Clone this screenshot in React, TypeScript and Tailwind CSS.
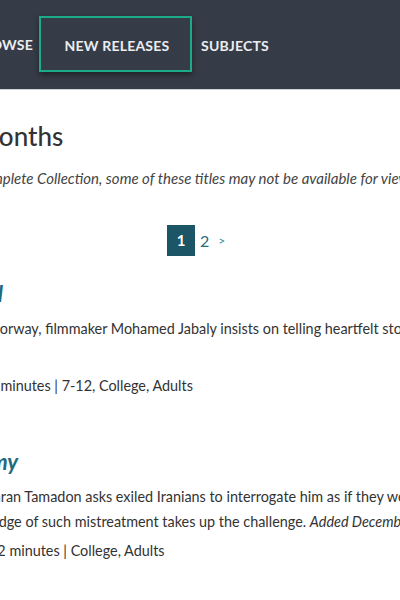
const lato = { fontFamily: "Lato, 'Noto Sans', sans-serif" };

function NavBar() {
  return (
    <header className="h-[90px] border-b border-[#cfd2d6] bg-[#363c47]">
      <nav className="flex h-full items-center text-[14px] font-bold tracking-[0.2px] text-[#ecedef]">
        <span className="-ml-[47px] w-[80px] shrink-0 whitespace-nowrap text-right">BROWSE</span>
        <span className="ml-[6px] mt-[-1px] flex h-[56px] w-[153px] shrink-0 items-center justify-center whitespace-nowrap border-2 border-[#1bab8b] pl-[3px] pt-[2px] shadow-[0_3px_6px_rgba(0,0,0,0.45)]">
          NEW RELEASES
        </span>
        <span className="ml-[9px] whitespace-nowrap pt-[1px]">SUBJECTS</span>
      </nav>
    </header>
  );
}

function Pagination() {
  return (
    <div className="ml-[167px] mt-[36px] flex items-center">
      <span className="flex h-[31px] w-[28px] items-center justify-center bg-[#1b5566] text-[15px] font-bold text-white">
        1
      </span>
      <span className="ml-[5px] text-[16px] text-[#2b6a7b]">2</span>
      <span className="ml-[9px] text-[12px] text-[#3a8a99]">&gt;</span>
    </div>
  );
}

type Release = {
  title: string;
  titleOffset: string;
  lines: { text: React.ReactNode; offset: string }[];
  meta: string;
  metaOffset: string;
  metaGap: string;
};

function ReleaseItem({ item, first }: { item: Release; first?: boolean }) {
  return (
    <article className={first ? "mt-[24px]" : "mt-[50px]"}>
      <h2
        className={`whitespace-nowrap text-[22px] font-bold italic leading-[28px] text-[#1e6a7e] ${item.titleOffset}`}
      >
        {item.title}
      </h2>
      <div className="mt-[8px] text-[14.4px] leading-[25px] text-[#333]">
        {item.lines.map((line, i) => (
          <p key={i} className={`h-[25px] whitespace-nowrap ${line.offset}`}>
            {line.text}
          </p>
        ))}
      </div>
      <p
        className={`whitespace-nowrap text-[14.4px] leading-[25px] text-[#333] ${item.metaGap} ${item.metaOffset}`}
      >
        {item.meta}
      </p>
    </article>
  );
}

const releases: Release[] = [
  {
    title: "Beautiful",
    titleOffset: "-ml-[82px]",
    lines: [
      {
        text: "Norway, filmmaker Mohamed Jabaly insists on telling heartfelt stories about his home in Gaza.",
        offset: "-ml-[11px]",
      },
      { text: "", offset: "" },
    ],
    meta: "90 minutes | 7-12, College, Adults",
    metaOffset: "-ml-[20px]",
    metaGap: "mt-[7px]",
  },
  {
    title: "Enemy",
    titleOffset: "-ml-[44px]",
    lines: [
      {
        text: "Mehran Tamadon asks exiled Iranians to interrogate him as if they were their captors.",
        offset: "-ml-[28px]",
      },
      {
        text: (
          <>
            knowledge of such mistreatment takes up the challenge.{" "}
            <em>Added December 2023</em>
          </>
        ),
        offset: "-ml-[47px]",
      },
    ],
    meta: "82 minutes | College, Adults",
    metaOffset: "-ml-[11px]",
    metaGap: "mt-[4px]",
  },
];

export default function App() {
  return (
    <div className="h-[600px] w-[400px] overflow-hidden bg-white" style={lato}>
      <NavBar />
      <main>
        <h1 className="-ml-[25px] mt-[29px] whitespace-nowrap text-[26px] font-medium leading-[34px] text-[#333]">
          Months
        </h1>
        <p className="-ml-[26px] mt-[14px] whitespace-nowrap text-[15px] italic leading-[22px] text-[#444]">
          Complete Collection, some of these titles may not be available for viewing.
        </p>
        <Pagination />
        <ReleaseItem item={releases[0]} first />
        <ReleaseItem item={releases[1]} />
      </main>
    </div>
  );
}
